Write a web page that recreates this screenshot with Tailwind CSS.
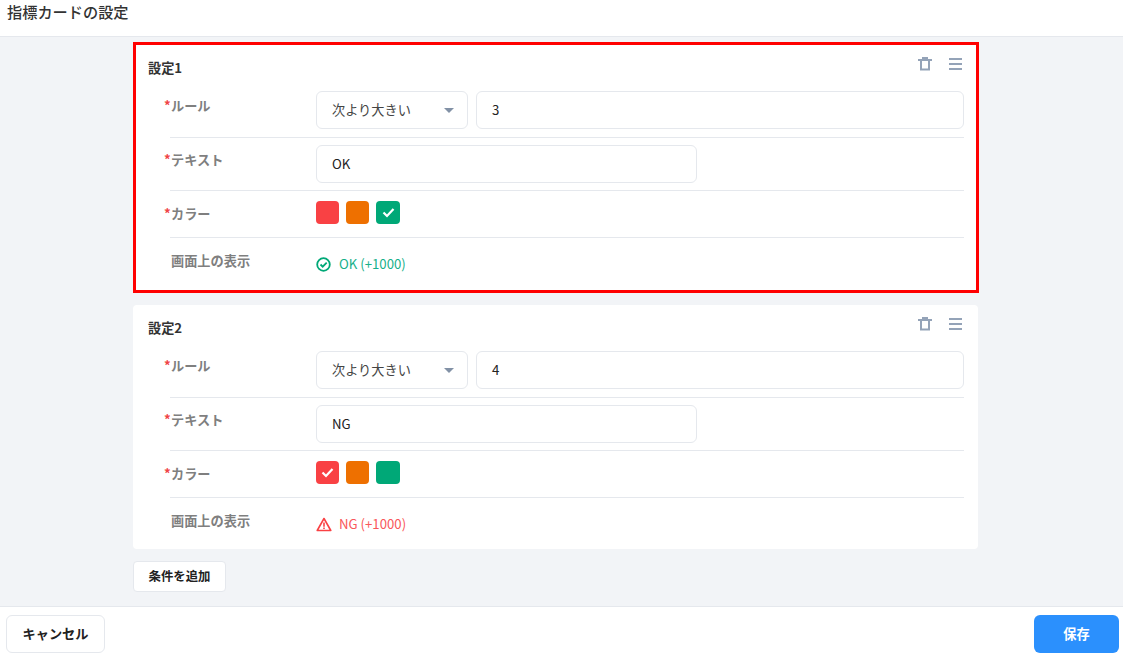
<!DOCTYPE html>
<html lang="ja">
<head>
    <meta charset="UTF-8">
    <title>指標カードの設定</title>
    <script src="https://cdn.jsdelivr.net/npm/@tailwindcss/browser@4"></script>
</head>
<body class="h-[660px] w-[1123px] overflow-hidden flex flex-col bg-white text-[13.2px] text-[#1f2937] font-['Noto_Sans_CJK_JP',sans-serif]">
    <!-- header -->
    <div class="h-[37px] shrink-0 border-b border-[#e5e8ed] pl-[7px] text-[15.2px] leading-[22px] font-medium text-[#333]">指標カードの設定</div>

    <!-- content -->
    <div class="h-[569px] shrink-0 bg-[#f2f4f7] pl-[133px] pt-[5px]">

        <!-- setting 1 -->
        <div class="relative w-[846px] h-[251px] bg-white border-[3px] border-[#ff0000] pl-[12px] pr-[12px]">
            <div class="pt-[13px] h-[46px] leading-[20px] font-bold text-[#333]">設定1</div>
            <div class="absolute right-[14px] top-[11px] flex gap-[15px] text-[#94a3b8]">
                <svg width="16" height="16" viewBox="0 0 16 16" fill="none" stroke="currentColor" stroke-width="2"><path d="M1 4h14M6 4V2h4v2M4 4v9.5h8V4"/></svg>
                <svg width="14" height="16" viewBox="0 0 14 16" fill="none" stroke="currentColor" stroke-width="2"><path d="M1 3h13M1 8h13M1 13h13"/></svg>
            </div>
            <div class="ml-[22px] w-[794px]">
                <div class="flex h-[47px] border-b border-[#e5e8ed]">
                    <div class="relative w-[146px] pl-[1px] pt-[5px] leading-[20px] font-bold text-[#7f7f7f]"><span class="absolute left-[-6px] text-[#f04444]">*</span>ルール</div>
                    <div class="flex w-[152px] h-[38px] items-center justify-between rounded-md border border-[#e5e8ed] pl-[15px] pr-[13px] text-[#444]">次より大きい
                        <span class="w-0 h-0 border-x-[5px] border-x-transparent border-t-[5px] border-t-[#8291a6]"></span></div>
                    <div class="ml-[8px] w-[488px] h-[38px] flex items-center rounded-md border border-[#e5e8ed] pl-[15px] text-[#222]">3</div>
                </div>
                <div class="flex h-[53px] pt-[7px] border-b border-[#e5e8ed]">
                    <div class="relative w-[146px] pl-[1px] pt-[5px] leading-[20px] font-bold text-[#7f7f7f]"><span class="absolute left-[-6px] text-[#f04444]">*</span>テキスト</div>
                    <div class="w-[381px] h-[38px] flex items-center rounded-md border border-[#e5e8ed] pl-[15px] text-[#222]">OK</div>
                </div>
                <div class="flex h-[47px] pt-[10px] border-b border-[#e5e8ed]">
                    <div class="relative w-[146px] pl-[1px] pt-[3px] leading-[20px] font-bold text-[#7f7f7f]"><span class="absolute left-[-6px] text-[#f04444]">*</span>カラー</div>
                    <div class="flex gap-[7px]">
                        <div class="w-[23px] h-[23px] rounded-[4px] bg-[#f94144]"></div>
                        <div class="w-[23px] h-[23px] rounded-[4px] bg-[#ee7000]"></div>
                        <div class="w-[24px] h-[23px] rounded-[4px] bg-[#00a877] flex items-center justify-center">
                            <svg width="13" height="11" viewBox="0 0 13 11" fill="none" stroke="white" stroke-width="2.2"><path d="M1.5 5.5l3.5 3.5 6.5-7"/></svg>
                        </div>
                    </div>
                </div>
                <div class="flex pt-[13px]">
                    <div class="w-[146px] pl-[1px] leading-[20px] font-bold text-[#7f7f7f]">画面上の表示</div>
                    <div class="flex items-center h-[26px] gap-[8px] text-[#17b08a] leading-[20px]">
                        <svg width="15" height="15" viewBox="0 0 15 15" fill="none" stroke="#00a877" stroke-width="1.8"><circle cx="7.5" cy="7.5" r="6.3"/><path d="M4.5 7.5l2.2 2.2 4-4"/></svg>
                        OK (+1000)
                    </div>
                </div>
            </div>
        </div>

        <!-- setting 2 -->
        <div class="relative mt-[12px] w-[845px] h-[244px] bg-white rounded-[4px] pl-[15px] pr-[14px]">
            <div class="pt-[13px] h-[46px] leading-[20px] font-bold text-[#333]">設定2</div>
            <div class="absolute right-[16px] top-[11px] flex gap-[15px] text-[#94a3b8]">
                <svg width="16" height="16" viewBox="0 0 16 16" fill="none" stroke="currentColor" stroke-width="2"><path d="M1 4h14M6 4V2h4v2M4 4v9.5h8V4"/></svg>
                <svg width="14" height="16" viewBox="0 0 14 16" fill="none" stroke="currentColor" stroke-width="2"><path d="M1 3h13M1 8h13M1 13h13"/></svg>
            </div>
            <div class="ml-[22px] w-[794px]">
                <div class="flex h-[47px] border-b border-[#e5e8ed]">
                    <div class="relative w-[146px] pl-[1px] pt-[5px] leading-[20px] font-bold text-[#7f7f7f]"><span class="absolute left-[-6px] text-[#f04444]">*</span>ルール</div>
                    <div class="flex w-[152px] h-[38px] items-center justify-between rounded-md border border-[#e5e8ed] pl-[15px] pr-[13px] text-[#444]">次より大きい
                        <span class="w-0 h-0 border-x-[5px] border-x-transparent border-t-[5px] border-t-[#8291a6]"></span></div>
                    <div class="ml-[8px] w-[488px] h-[38px] flex items-center rounded-md border border-[#e5e8ed] pl-[15px] text-[#222]">4</div>
                </div>
                <div class="flex h-[53px] pt-[7px] border-b border-[#e5e8ed]">
                    <div class="relative w-[146px] pl-[1px] pt-[5px] leading-[20px] font-bold text-[#7f7f7f]"><span class="absolute left-[-6px] text-[#f04444]">*</span>テキスト</div>
                    <div class="w-[381px] h-[38px] flex items-center rounded-md border border-[#e5e8ed] pl-[15px] text-[#222]">NG</div>
                </div>
                <div class="flex h-[47px] pt-[10px] border-b border-[#e5e8ed]">
                    <div class="relative w-[146px] pl-[1px] pt-[3px] leading-[20px] font-bold text-[#7f7f7f]"><span class="absolute left-[-6px] text-[#f04444]">*</span>カラー</div>
                    <div class="flex gap-[7px]">
                        <div class="w-[23px] h-[23px] rounded-[4px] bg-[#f94144] flex items-center justify-center">
                            <svg width="13" height="11" viewBox="0 0 13 11" fill="none" stroke="white" stroke-width="2.2"><path d="M1.5 5.5l3.5 3.5 6.5-7"/></svg>
                        </div>
                        <div class="w-[23px] h-[23px] rounded-[4px] bg-[#ee7000]"></div>
                        <div class="w-[24px] h-[23px] rounded-[4px] bg-[#00a877]"></div>
                    </div>
                </div>
                <div class="flex pt-[13px]">
                    <div class="w-[146px] pl-[1px] leading-[20px] font-bold text-[#7f7f7f]">画面上の表示</div>
                    <div class="flex items-center h-[26px] gap-[7px] text-[#f9575a] leading-[20px]">
                        <svg width="16" height="15" viewBox="0 0 16 15" fill="none" stroke="#f94144" stroke-width="1.6"><path d="M8 1.5L1.2 13.5h13.6z" stroke-linejoin="round"/><path d="M8 5.5v4.2M8 10.6v1.4"/></svg>
                        NG (+1000)
                    </div>
                </div>
            </div>
        </div>

        <button class="mt-[12px] w-[93px] h-[31px] bg-white rounded-[4px] border border-[#e5e8ed] text-[12.4px] font-bold text-[#222]">条件を追加</button>
    </div>

    <!-- footer -->
    <div class="flex-1 border-t border-[#e5e8ed] flex justify-between pl-[6px] pr-[4px] pt-[8px]">
        <button class="w-[99px] h-[38px] rounded-md border border-[#e5e8ed] bg-white font-bold text-[#222]">キャンセル</button>
        <button class="w-[85px] h-[38px] rounded-md bg-[#2b90fd] font-bold text-white">保存</button>
    </div>
</body>
</html>
